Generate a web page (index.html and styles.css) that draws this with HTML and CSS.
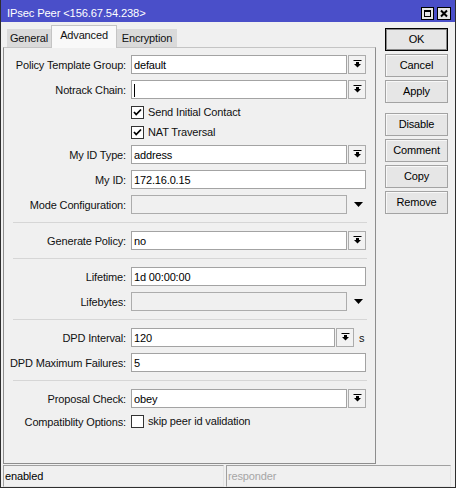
FILE: index.html
```html
<!DOCTYPE html>
<html>
<head>
<meta charset="utf-8">
<link rel="stylesheet" href="styles.css">
</head>
<body>
<div class="window">
  <div class="titlebar">
    <span class="title">IPsec Peer &lt;156.67.54.238&gt;</span>
    <div class="tb-btns">
      <span class="tb-btn max"><svg width="11" height="11" viewBox="0 0 11 11"><rect x="2.5" y="2.5" width="6" height="6" fill="none" stroke="#000" stroke-width="1"/><rect x="2" y="2" width="7" height="2" fill="#000"/></svg></span>
      <span class="tb-btn close"><svg width="12" height="11" viewBox="0 0 12 11"><path d="M3 2.5 L9 8.5 M9 2.5 L3 8.5" stroke="#000" stroke-width="2" fill="none"/></svg></span>
    </div>
  </div>
  <div class="body">
    <div class="main">
      <div class="tabs">
        <div class="tab t-general">General</div>
        <div class="tab t-advanced active">Advanced</div>
        <div class="tab t-encryption">Encryption</div>
      </div>
      <div class="panel">
        <div class="row"><div class="lbl">Policy Template Group:</div><div class="ctl"><div class="input w-dd">default</div><div class="dd-btn"><svg width="9" height="8" viewBox="0 0 9 8"><rect x="0.5" y="0" width="8" height="1" fill="#000"/><rect x="3" y="2" width="3" height="2" fill="#000"/><path d="M1 4 H8 L4.5 7.5 Z" fill="#000"/></svg></div></div></div>
        <div class="row"><div class="lbl">Notrack Chain:</div><div class="ctl"><div class="input w-dd"><span class="caret"></span></div><div class="dd-btn"><svg width="9" height="8" viewBox="0 0 9 8"><rect x="0.5" y="0" width="8" height="1" fill="#000"/><rect x="3" y="2" width="3" height="2" fill="#000"/><path d="M1 4 H8 L4.5 7.5 Z" fill="#000"/></svg></div></div></div>
        <div class="row cb"><span class="check"><svg width="13" height="13" viewBox="0 0 13 13"><rect x="0.5" y="0.5" width="12" height="12" fill="#fff" stroke="#333"/><polyline points="3,6 5.2,8.5 10,3.5" fill="none" stroke="#000" stroke-width="1.8"/></svg></span><span class="cb-text">Send Initial Contact</span></div>
        <div class="row cb"><span class="check"><svg width="13" height="13" viewBox="0 0 13 13"><rect x="0.5" y="0.5" width="12" height="12" fill="#fff" stroke="#333"/><polyline points="3,6 5.2,8.5 10,3.5" fill="none" stroke="#000" stroke-width="1.8"/></svg></span><span class="cb-text">NAT Traversal</span></div>
        <div class="row"><div class="lbl">My ID Type:</div><div class="ctl"><div class="input w-dd">address</div><div class="dd-btn"><svg width="9" height="8" viewBox="0 0 9 8"><rect x="0.5" y="0" width="8" height="1" fill="#000"/><rect x="3" y="2" width="3" height="2" fill="#000"/><path d="M1 4 H8 L4.5 7.5 Z" fill="#000"/></svg></div></div></div>
        <div class="row"><div class="lbl">My ID:</div><div class="ctl"><div class="input w-full">172.16.0.15</div></div></div>
        <div class="row"><div class="lbl">Mode Configuration:</div><div class="ctl"><div class="input w-dd disabled"></div><div class="dd-arrow"><svg width="9" height="5" viewBox="0 0 9 5"><path d="M0 0 H9 L4.5 5 Z" fill="#000"/></svg></div></div></div>
        <div class="sep"></div>
        <div class="row"><div class="lbl">Generate Policy:</div><div class="ctl"><div class="input w-dd">no</div><div class="dd-btn"><svg width="9" height="8" viewBox="0 0 9 8"><rect x="0.5" y="0" width="8" height="1" fill="#000"/><rect x="3" y="2" width="3" height="2" fill="#000"/><path d="M1 4 H8 L4.5 7.5 Z" fill="#000"/></svg></div></div></div>
        <div class="sep"></div>
        <div class="row"><div class="lbl">Lifetime:</div><div class="ctl"><div class="input w-full">1d 00:00:00</div></div></div>
        <div class="row"><div class="lbl">Lifebytes:</div><div class="ctl"><div class="input w-dd disabled"></div><div class="dd-arrow"><svg width="9" height="5" viewBox="0 0 9 5"><path d="M0 0 H9 L4.5 5 Z" fill="#000"/></svg></div></div></div>
        <div class="sep"></div>
        <div class="row"><div class="lbl">DPD Interval:</div><div class="ctl"><div class="input w-unit">120</div><div class="dd-btn"><svg width="9" height="8" viewBox="0 0 9 8"><rect x="0.5" y="0" width="8" height="1" fill="#000"/><rect x="3" y="2" width="3" height="2" fill="#000"/><path d="M1 4 H8 L4.5 7.5 Z" fill="#000"/></svg></div><span class="unit">s</span></div></div>
        <div class="row"><div class="lbl">DPD Maximum Failures:</div><div class="ctl"><div class="input w-full">5</div></div></div>
        <div class="sep"></div>
        <div class="row"><div class="lbl">Proposal Check:</div><div class="ctl"><div class="input w-dd">obey</div><div class="dd-btn"><svg width="9" height="8" viewBox="0 0 9 8"><rect x="0.5" y="0" width="8" height="1" fill="#000"/><rect x="3" y="2" width="3" height="2" fill="#000"/><path d="M1 4 H8 L4.5 7.5 Z" fill="#000"/></svg></div></div></div>
        <div class="row cb labeled"><div class="lbl">Compatiblity Options:</div><span class="check"><svg width="13" height="13" viewBox="0 0 13 13"><rect x="0.5" y="0.5" width="12" height="12" fill="#fff" stroke="#333"/></svg></span><span class="cb-text">skip peer id validation</span></div>
      </div>
    </div>
    <div class="side">
      <div class="btn default">OK</div>
      <div class="btn">Cancel</div>
      <div class="btn">Apply</div>
      <div class="btn gap">Disable</div>
      <div class="btn">Comment</div>
      <div class="btn">Copy</div>
      <div class="btn">Remove</div>
    </div>
  </div>
  <div class="status">
    <div class="cell c-left">enabled</div>
    <div class="cell c-right dim">responder</div>
  </div>
</div>
</body>
</html>
```
FILE: styles.css
```css
* { box-sizing: border-box; }
html, body { margin: 0; padding: 0; }
body {
  width: 456px;
  height: 488px;
  font-family: "Liberation Sans", Arial, sans-serif;
  font-size: 11px;
  letter-spacing: -0.15px;
  color: #111;
  background: #f0f0f0;
}
.window {
  width: 456px;
  height: 488px;
  border: 1px solid #2e2e2e;
  border-top: none;
  background: #f0f0f0;
  display: flex;
  flex-direction: column;
}
.titlebar {
  height: 22px;
  flex: none;
  background: #4a4fc9;
  color: #fff;
  display: flex;
  align-items: flex-start;
  padding: 5px 0 0 6px;
  line-height: 17px;
  font-size: 11.2px;
  letter-spacing: -0.15px;
}
.tb-btns {
  margin-left: auto;
  margin-right: 4px;
  margin-top: 2px;
  display: flex;
  gap: 3px;
}
.tb-btn {
  height: 13px;
  border: 1px solid #000;
  background: #e6e6e6;
  display: flex;
  align-items: center;
  justify-content: center;
}
.tb-btn.max { width: 13px; }
.tb-btn.close { width: 14px; }
.body {
  display: flex;
  height: 442px;
  flex: none;
  padding: 0 7px 0 2px;
  gap: 9px;
}
.main {
  width: 373px;
  display: flex;
  flex-direction: column;
}
.tabs {
  display: flex;
  align-items: flex-end;
  height: 22px;
  margin-top: 3px;
  padding-left: 4px;
  position: relative;
  z-index: 1;
  flex: none;
}
.tab {
  height: 18px;
  line-height: 18px;
  text-align: center;
  background: #dadada;
}
.t-general { width: 44px; }
.t-advanced { width: 66px; }
.t-encryption { width: 60px; }
.tab.active {
  height: 23px;
  margin-bottom: -1px;
  background: #f9f9f9;
  border: 1px solid #c4c4c4;
  border-bottom: none;
  line-height: 18px;
}
.panel {
  flex: 1;
  border: 1px solid #8d8d8d;
  border-top-color: #c4c4c4;
  padding: 7px 9px 0 0;
  display: flex;
  flex-direction: column;
  gap: 6px;
}
.row {
  display: flex;
  align-items: center;
  height: 19px;
  flex: none;
}
.lbl {
  width: 122px;
  text-align: right;
  white-space: nowrap;
  padding-top: 1px;
}
.ctl {
  margin-left: 5px;
  display: flex;
  align-items: center;
  height: 19px;
}
.input {
  height: 19px;
  border: 1px solid #a3a3a3;
  background: #fff;
  padding-left: 2px;
  line-height: 18px;
  color: #000;
  white-space: nowrap;
}
.input.disabled { background: #f0f0f0; border-color: #acacac; }
.w-dd { width: 216px; }
.w-full { width: 235px; }
.w-unit { width: 204px; }
.caret {
  display: inline-block;
  width: 1px;
  height: 13px;
  background: #000;
  vertical-align: middle;
  margin-top: -2px;
}
.dd-btn {
  width: 18px;
  height: 19px;
  margin-left: 1px;
  border: 1px solid #acacac;
  background: #f2f2f2;
  display: flex;
  align-items: center;
  justify-content: center;
  padding-bottom: 2px;
}
.dd-arrow {
  width: 18px;
  height: 19px;
  margin-left: 1px;
  display: flex;
  align-items: center;
  justify-content: center;
}
.dd-arrow svg { margin-left: 2px; }
.unit { margin-left: 5px; }
.row.cb {
  height: 14px;
  padding-left: 127px;
}
.row.cb.labeled { padding-left: 0; }
.row.cb.labeled .lbl { margin-right: 5px; }
.check { width: 13px; height: 13px; display: flex; }
.cb-text { margin-left: 4px; white-space: nowrap; }
.sep {
  height: 1px;
  width: 354px;
  margin: 2px 0 2px 9px;
  background: #d6d6d6;
  flex: none;
}
.side {
  width: 63px;
  padding-top: 6px;
  display: flex;
  flex-direction: column;
  gap: 3px;
}
.btn {
  height: 23px;
  border: 1px solid #a3a3a3;
  background: #e6e6e6;
  box-shadow: inset 1px 1px 0 #f8f8f8;
  text-align: center;
  line-height: 21px;
  color: #000;
}
.btn.default {
  border-color: #000;
  box-shadow: inset 0 0 0 1px #8a8a8a;
}
.btn.gap { margin-top: 7px; }
.status {
  display: flex;
  height: 22px;
  flex: none;
  margin-top: 1px;
  padding: 0 4px 0 2px;
  gap: 2px;
}
.cell {
  height: 22px;
  border: 1px solid;
  border-color: #a0a0a0 #e4e4e4 #e4e4e4 #a0a0a0;
  padding-left: 1px;
  line-height: 20px;
  color: #000;
}
.c-left { width: 221px; }
.c-right { width: 225px; }
.dim { color: #a6a6a6; }
```
